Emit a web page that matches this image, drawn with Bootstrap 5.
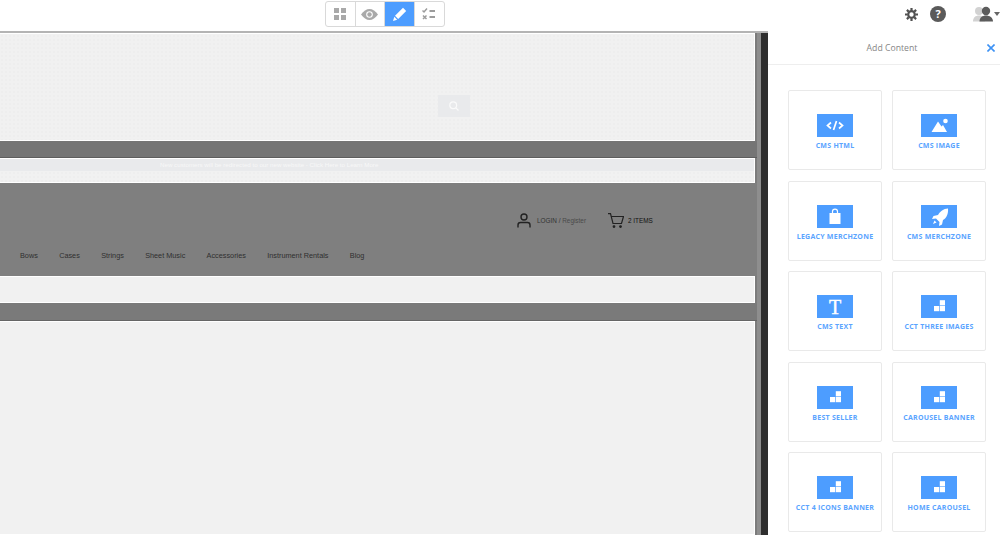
<!doctype html>
<html lang="en">
<head>
    <meta charset="utf-8">
    <meta name="viewport" content="width=device-width, initial-scale=1">
    <title>Add Content</title>
    <link href="https://cdn.jsdelivr.net/npm/bootstrap@5.3.3/dist/css/bootstrap.min.css" rel="stylesheet">
    <style>
        html, body { height: 535px; overflow: hidden; }
        body { background: #fff; font-family: "Open Sans", "Liberation Sans", sans-serif; }

        /* top toolbar */
        .top-bar { height: 31px; padding-top: 1px; position: relative; }
        .mode-group { margin-left: 325px; width: 120px; height: 26px; border: 1px solid #d9d9d9; border-radius: 3px; background: #fff; }
        .mode-btn { width: 30px; height: 24px; border-right: 1px solid #d9d9d9; }
        .mode-btn:last-child { border-right: 0; }
        .mode-btn.on { background: #4d9dff; }
        .top-icons { position: absolute; top: 6px; right: 0; }
        .gear-wrap { margin-right: 12px; }
        .help-dot { width: 16px; height: 16px; border-radius: 50%; background: #5a5a5a; color: #fff; font: bold 11px/16px "Open Sans", sans-serif; text-align: center; margin-right: 27px; }
        .caret-down { width: 0; height: 0; border-left: 3px solid transparent; border-right: 3px solid transparent; border-top: 4px solid #666; margin: 0 0 0 1px; }

        /* edit canvas */
        .work-area { height: 504px; }
        .stage { width: 768px; flex: none; border-top: 2px solid #b4b4b4; }
        .canvas-col { width: 757px; background: #7c7c7c; flex: none; }
        .rail-a { width: 4px; background: #8e8e8e; flex: none; }
        .rail-b { width: 7px; background: #2e2e2e; flex: none; }
        .sheet { width: 755px; background-color: #f1f1f1; border: 1px solid #fff; border-left: 0; }
        .dotted { background-image: radial-gradient(#eeeeee 1px, transparent 1px); background-size: 4px 4px; }
        .sheet-a { height: 108px; position: relative; }
        .sheet-b { height: 25px; }
        .sheet-c { height: 27px; }
        .sheet-d { height: 214px; }
        .band-a { height: 17px; background: #757575; border-bottom: 1px solid #5e5e5e; }
        .band-c { height: 18px; background: #7a7a7a; border-bottom: 1px solid #666; }
        .promo-strip { height: 12px; background: #e9eaec; color: #f8f8f8; font: 6.2px/12px "Liberation Sans", sans-serif; padding-left: 160px; white-space: nowrap; }
        .search-stub { position: absolute; left: 438px; top: 61px; width: 32px; height: 22px; background: #e9eaec; }
        .store-head { height: 93px; position: relative; background: #7f7f7f; }
        .acct-row { position: absolute; top: 30px; left: 517px; color: #333; font-family: "Liberation Sans", sans-serif; font-size: 6.4px; }
        .acct-row .reg { color: #4a4a4a; }
        .login-text { margin-left: 6px; margin-right: 22px; }
        .cart-label { color: #111; margin-left: 4px; }
        .menu-row { position: absolute; top: 67px; left: 20px; gap: 21.3px; font: 7.3px/12px "Liberation Sans", sans-serif; color: #2f2f2f; white-space: nowrap; }

        /* side panel */
        .side-panel { width: 232px; flex: none; background: #fff; }
        .panel-head { height: 34px; border-bottom: 1px solid #eee; position: relative; font-size: 8.7px; color: #868686; text-align: center; line-height: 34px; padding-left: 16px; }
        .panel-close { position: absolute; left: 219px; top: 13px; display: block; line-height: 0; }
        .tile-grid { display: grid; grid-template-columns: 94px 94px; column-gap: 10px; row-gap: 10.5px; padding: 25px 0 0 20px; }
        .tile { height: 80px; border: 1px solid #e9e9e9; border-radius: 2px; padding-top: 23px; text-align: center; }
        .tile-icon { width: 36px; height: 23px; background: #4d9dff; margin: 0 auto; line-height: 0; }
        .tile-label { font-size: 7px; font-weight: 700; color: #5aa4ff; line-height: 10px; margin-top: 4px; letter-spacing: .25px; white-space: nowrap; }
    </style>
</head>
<body>
    <div class="top-bar">
        <div class="mode-group d-flex">
            <div class="mode-btn d-flex align-items-center justify-content-center">
                <svg width="12" height="12" viewBox="0 0 12 12" fill="#a9a9a9"><rect width="5" height="5"/><rect x="7" width="5" height="5"/><rect y="7" width="5" height="5"/><rect x="7" y="7" width="5" height="5"/></svg>
            </div>
            <div class="mode-btn d-flex align-items-center justify-content-center">
                <svg width="17" height="11" viewBox="0 0 17 11"><path d="M0 5.500C2.500 2 5.500 0 8.500 0s6 2 8.500 5.500C14.500 9 11.500 11 8.500 11S2.500 9 0 5.500z" fill="#a9a9a9"/><circle cx="8.500" cy="5.500" r="3.300" fill="#fff"/><circle cx="8.500" cy="5.500" r="2.200" fill="#a9a9a9"/></svg>
            </div>
            <div class="mode-btn on d-flex align-items-center justify-content-center">
                <svg width="15" height="15" viewBox="0 0 15 15" fill="#fff"><path d="M11 .8l3.200 3.200-8 8-3.200-3.200z"/><path d="M2.300 9.800l2.900 2.900L1 14z"/></svg>
            </div>
            <div class="mode-btn d-flex align-items-center justify-content-center">
                <svg width="14" height="12" viewBox="0 0 14 12" fill="none" stroke="#9c9c9c" stroke-width="1.500"><path d="M0.500 2.500l1.500 1.500 3-3.500"/><path d="M1 7.500l3.500 3.500M4.500 7.500L1 11"/><path d="M7.500 3H13M7.500 9H13" stroke-width="2"/></svg>
            </div>
        </div>
        <div class="top-icons d-flex align-items-center">
            <div class="gear-wrap d-flex">
                <svg width="13" height="13" viewBox="0 0 13 13"><circle cx="6.500" cy="6.500" r="3.300" fill="none" stroke="#505050" stroke-width="2.200"/><g stroke="#505050" stroke-width="2.200"><path d="M6.500 0v2.500M6.500 10.500V13M0 6.500h2.500M10.500 6.500H13M1.900 1.900l1.800 1.800M9.300 9.300l1.800 1.800M11.100 1.900L9.300 3.700M3.700 9.300l-1.800 1.800"/></g></svg>
            </div>
            <div class="help-dot">?</div>
            <svg width="20" height="16" viewBox="0 0 20 16"><circle cx="6" cy="5" r="4" fill="#d2d2d2"/><path d="M0 15.500c0-4 2.500-6 6-6s6 2 6 6z" fill="#d2d2d2"/><circle cx="13" cy="5" r="4.200" fill="#5c5c5c"/><path d="M6.500 15.500c0-4 3-6 6.500-6s7 2 7 6z" fill="#5c5c5c"/></svg>
            <div class="caret-down"></div>
        </div>
    </div>

    <div class="work-area d-flex">
        <div class="stage d-flex">
            <div class="canvas-col">
                <div class="sheet sheet-a dotted">
                    <div class="search-stub d-flex align-items-center justify-content-center">
                        <svg width="10" height="10" viewBox="0 0 10 10" fill="none" stroke="#fafafa" stroke-width="1.200"><circle cx="4.200" cy="4.200" r="3.400"/><path d="M6.800 6.800L9.500 9.500"/></svg>
                    </div>
                </div>
                <div class="band-a"></div>
                <div class="sheet sheet-b dotted"><div class="promo-strip">New customers will be redirected to our new website - Click Here to Learn More</div></div>
                <div class="store-head">
                    <div class="acct-row d-flex align-items-center">
                        <svg width="14" height="15" viewBox="0 0 14 15" fill="none" stroke="#222" stroke-width="1.400"><circle cx="7" cy="4" r="3"/><path d="M1 14.500V12c0-1.500 1.200-2.500 2.500-2.500h7c1.300 0 2.500 1 2.500 2.500v2.500"/></svg>
                        <span class="login-text">LOGIN / <span class="reg">Register</span></span>
                        <svg width="16" height="15" viewBox="0 0 16 15" fill="none" stroke="#222" stroke-width="1.200"><path d="M0 .6h2.500L5 10.500h8.500L15.500 3.500H3.200"/><circle cx="6" cy="13.600" r=".8" fill="#222"/><circle cx="12.500" cy="13.600" r=".8" fill="#222"/></svg>
                        <span class="cart-label">2 ITEMS</span>
                    </div>
                    <div class="menu-row d-flex">
                        <span>Bows</span><span>Cases</span><span>Strings</span><span>Sheet Music</span><span>Accessories</span><span>Instrument Rentals</span><span>Blog</span>
                    </div>
                </div>
                <div class="sheet sheet-c"></div>
                <div class="band-c"></div>
                <div class="sheet sheet-d"></div>
            </div>
            <div class="rail-a"></div>
            <div class="rail-b"></div>
        </div>
        <div class="side-panel">
            <div class="panel-head">Add Content
                <span class="panel-close"><svg width="8" height="8" viewBox="0 0 9 9" stroke="#3d92f5" stroke-width="1.800"><path d="M.5.500l8 8M8.500.500l-8 8"/></svg></span>
            </div>
            <div class="tile-grid" id="tiles"></div>
        </div>
    </div>

    <script>
        // tile glyphs, all drawn white inside the 36x23 blue box
        const blocks = '<rect x="13" y="11" width="5.200" height="5.200"/><rect x="18.800" y="11" width="5.200" height="5.200"/><rect x="18.800" y="5.200" width="5.200" height="5.200"/>';
        const glyphs = {
            html: '<g fill="none" stroke="#fff" stroke-width="1.700"><path d="M14 8.500l-3.500 3 3.500 3M22 8.500l3.500 3-3.500 3M19.500 7l-3 9"/></g>',
            image: '<path d="M10.500 18L17 7.500l3.500 5 1.500-1.500 4 7z"/><circle cx="24.500" cy="7" r="2.300"/>',
            bag: '<rect x="12.500" y="8" width="11" height="11"/><path d="M15.500 8V6.500C15.500 5 16.500 4.200 18 4.200s2.500.8 2.500 2.300V8" fill="none" stroke="#fff" stroke-width="1.200"/>',
            rocket: '<path d="M27 3.500c-4.500 0-8 3-10 6.500l-4.500 1-1.500 3 4-.5 3.500 3.500-.5 4 3-1.500 1-4.500c3.500-2 5.500-6 5-11.500z"/><path d="M13.500 15.500l2 2-3.500 1.500z"/>',
            text: '<text x="18" y="18.500" text-anchor="middle" font-family="Liberation Serif, serif" font-size="20" stroke="#fff" stroke-width=".4">T</text>',
            blocks: blocks
        };
        const tiles = [
            ['CMS HTML', 'html'], ['CMS IMAGE', 'image'],
            ['LEGACY MERCHZONE', 'bag'], ['CMS MERCHZONE', 'rocket'],
            ['CMS TEXT', 'text'], ['CCT THREE IMAGES', 'blocks'],
            ['BEST SELLER', 'blocks'], ['CAROUSEL BANNER', 'blocks'],
            ['CCT 4 ICONS BANNER', 'blocks'], ['HOME CAROUSEL', 'blocks']
        ];
        document.getElementById('tiles').innerHTML = tiles.map(t => `
            <div class="tile">
                <div class="tile-icon"><svg width="36" height="23" viewBox="0 0 36 23" fill="#fff">${glyphs[t[1]]}</svg></div>
                <div class="tile-label">${t[0]}</div>
            </div>`).join('');
    </script>
    <script src="https://cdn.jsdelivr.net/npm/bootstrap@5.3.3/dist/js/bootstrap.bundle.min.js"></script>
</body>
</html>
